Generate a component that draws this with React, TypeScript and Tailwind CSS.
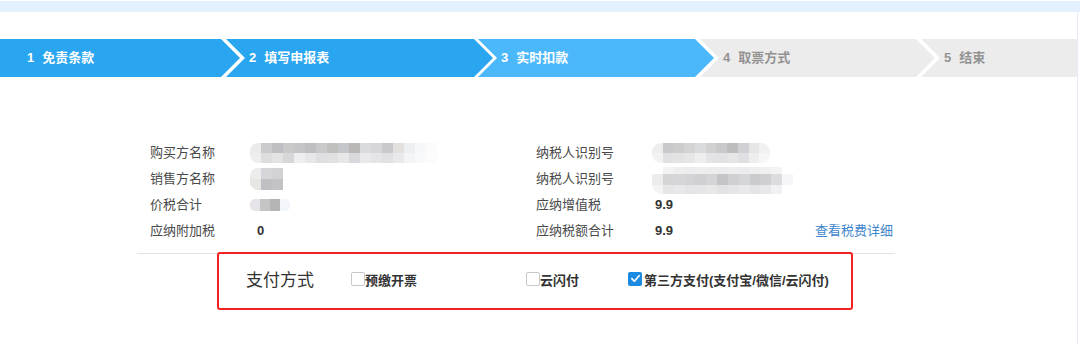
import React from "react";

const FONT = "font-['Liberation_Sans','Noto_Sans_CJK_SC',sans-serif]";

function Mosaic({ rows, cell = "w-[11px]", h = ["h-[10px]"], className = "" }: { rows: string[][]; cell?: string; h?: string[]; className?: string }) {
  return (
    <div className={`flex flex-col overflow-hidden ${className}`}>
      {rows.map((r, i) => (
        <div key={i} className="flex">
          {r.map((c, j) => (
            <div key={j} className={`${cell} ${h[i] ?? h[0]} ${c}`} />
          ))}
        </div>
      ))}
    </div>
  );
}

const buyer = [
  ["bg-[#ebebeb]", "bg-[#cbcbcd]", "bg-[#bebec2]", "bg-[#c9c9c9]", "bg-[#c5c5c7]", "bg-[#bfbfc3]", "bg-[#c9c9cb]", "bg-[#c0c1bd]", "bg-[#c5c7cd]", "bg-[#bab7b7]", "bg-[#d9dbde]", "bg-[#d7d7d9]", "bg-[#c9c9cd]", "bg-[#e3e1dd]", "bg-[#eeeff2]", "bg-[#f6f7f9]", "bg-[#fbfbfc]"],
  ["bg-[#eeeeee]", "bg-[#dddddd]", "bg-[#e3e3e3]", "bg-[#d7d7d9]", "bg-[#eeeef0]", "bg-[#e7e7e9]", "bg-[#dfdfe1]", "bg-[#e1e1e3]", "bg-[#e7e7e7]", "bg-[#d9d9dd]", "bg-[#e9e9eb]", "bg-[#e5e5e7]", "bg-[#e1e1e3]", "bg-[#e9e9eb]", "bg-[#f3f4f6]", "bg-[#f8f9fa]", "bg-[#fcfcfd]"],
];
const seller = [
  ["bg-[#ececec]", "bg-[#d6d6da]", "bg-[#d2d2d4]"],
  ["bg-[#e8e6e2]", "bg-[#c0c0c4]", "bg-[#c3c3c5]"],
];
const price = [["bg-[#e6e4e8]", "bg-[#c5c5c5]", "bg-[#b5b5b5]", "bg-[#f2f5f9]"]];
const tax1 = [
  ["bg-[#eeeeee]", "bg-[#c9c9cd]", "bg-[#cdcdcd]", "bg-[#d4d4d4]", "bg-[#d9dbdd]", "bg-[#d1d1d1]", "bg-[#c9c9cb]", "bg-[#bdbdbd]", "bg-[#d1d1d5]", "bg-[#e6e6e6]", "bg-[#f1f1f1]"],
  ["bg-[#f2f2f2]", "bg-[#e1e1e3]", "bg-[#e3e3e3]", "bg-[#e6e6e6]", "bg-[#eeeeef]", "bg-[#e4e4e6]", "bg-[#e2e2e4]", "bg-[#e6e6e6]", "bg-[#e0e0e4]", "bg-[#eeeeee]", "bg-[#f6f6f6]"],
];
const tax2 = [
  ["bg-[#ffffff]", "bg-[#f3f3f3]", "bg-[#eeeeee]", "bg-[#ececee]", "bg-[#eeeeee]", "bg-[#ededed]", "bg-[#ececee]", "bg-[#eeeeef]", "bg-[#ececee]", "bg-[#eeeeef]", "bg-[#f0f0f0]", "bg-[#f3f3f3]", "bg-[#ffffff]"],
  ["bg-[#ececec]", "bg-[#d5d5d5]", "bg-[#d6d6d8]", "bg-[#d3d3d5]", "bg-[#d0d0d4]", "bg-[#d5d5d7]", "bg-[#c5c5c9]", "bg-[#d0d0d2]", "bg-[#d4d6d9]", "bg-[#cbcbcf]", "bg-[#cfcfd1]", "bg-[#dcdcde]", "bg-[#f6f6f8]"],
  ["bg-[#f3f3f3]", "bg-[#e6e6e6]", "bg-[#e8e8ea]", "bg-[#e4e4e6]", "bg-[#e6e6e8]", "bg-[#e8e8e8]", "bg-[#e3e3e5]", "bg-[#e6e6e8]", "bg-[#e9e9eb]", "bg-[#e5e5e7]", "bg-[#e8e8ea]", "bg-[#f1f1f3]", "bg-[#ffffff]"],
];

function Steps() {
  const txt = "flex items-center gap-[8px] text-[13px] font-bold";
  return (
    <div className="flex h-[38px] w-[1077px]">
      <div className={`${txt} h-full w-[240px] shrink-0 bg-[#2aa5ef] pl-[27px] text-white [clip-path:polygon(0_0,221px_0,240px_50%,221px_100%,0_100%)]`}>
        <span>1</span><span>免责条款</span>
      </div>
      <div className={`${txt} -ml-[14px] h-full w-[267px] shrink-0 bg-[#2aa5ef] pl-[23px] text-white [clip-path:polygon(0_0,248px_0,267px_50%,248px_100%,0_100%,19px_50%)]`}>
        <span>2</span><span>填写申报表</span>
      </div>
      <div className={`${txt} -ml-[15px] h-full w-[236px] shrink-0 bg-[#4cb8fc] pl-[23px] text-white [clip-path:polygon(0_0,217px_0,236px_50%,217px_100%,0_100%,19px_50%)]`}>
        <span>3</span><span>实时扣款</span>
      </div>
      <div className={`${txt} -ml-[14px] h-full w-[235px] shrink-0 bg-[#ececec] pl-[23px] text-[#939393] [clip-path:polygon(0_0,216px_0,235px_50%,216px_100%,0_100%,19px_50%)]`}>
        <span>4</span><span>取票方式</span>
      </div>
      <div className={`${txt} -ml-[14px] h-full flex-1 bg-[#ececec] pl-[23px] text-[#939393] [clip-path:polygon(0_0,100%_0,100%_100%,0_100%,19px_50%)]`}>
        <span>5</span><span>结束</span>
      </div>
    </div>
  );
}

function Checkbox({ checked }: { checked?: boolean }) {
  if (checked) {
    return (
      <span className="mt-[-5px] flex h-[14px] w-[14px] shrink-0 items-center justify-center rounded-[2px] bg-[#1c8ae0]">
        <svg width="11" height="11" viewBox="0 0 12 12" fill="none">
          <path d="M2 6.2 L4.8 9 L10 3" stroke="white" strokeWidth="1.9" strokeLinecap="round" strokeLinejoin="round" />
        </svg>
      </span>
    );
  }
  return <span className="mt-[-5px] h-[14px] w-[14px] shrink-0 rounded-[2px] border border-[#c8c8c8] bg-white" />;
}

export default function App() {
  const label = "text-[13px] text-[#4a4a4a]";
  const val = "text-[13px] font-bold text-[#333]";
  return (
    <div className={`h-[344px] w-[1080px] overflow-hidden bg-white ${FONT}`}>
      <div className="pt-px">
        <div className="h-[11px] w-full bg-[#e3f0fe]" />
      </div>
      <div className="h-[332px] w-[1078px] border-r border-[#e4edf7]">
        <div className="pt-[27px]">
          <Steps />
        </div>

        <div className="ml-[137px] mt-[63px] w-[758px] border-b border-[#e3e3e3] pb-[9px] pl-[13px]">
          <div className="grid grid-cols-[100px_286px_116px_163px_80px] auto-rows-[26px] items-center">
            <div className={label}>购买方名称</div>
            <div><Mosaic rows={buyer} className="w-[190px] rounded-l-[8px] rounded-r-[3px]" /></div>
            <div className={label}>纳税人识别号</div>
            <div><Mosaic rows={tax1} className="w-[118px] rounded-[9px]" /></div>
            <div />

            <div className={label}>销售方名称</div>
            <div><Mosaic rows={seller} h={["h-[11px]", "h-[11px]"]} className="w-[33px] rounded-l-[8px]" /></div>
            <div className={label}>纳税人识别号</div>
            <div className="mt-[3px]"><Mosaic rows={tax2} h={["h-[7px]", "h-[11px]", "h-[9px]"]} className="w-[141px] rounded-l-[10px] rounded-r-[8px]" /></div>
            <div />

            <div className={label}>价税合计</div>
            <div><Mosaic rows={price} h={["h-[12px]"]} className="w-[40px] rounded-l-[5px] rounded-r-[5px]" /></div>
            <div className={label}>应纳增值税</div>
            <div className={`${val} pl-[3px]`}>9.9</div>
            <div />

            <div className={label}>应纳附加税</div>
            <div className={`${val} pl-[7px]`}>0</div>
            <div className={label}>应纳税额合计</div>
            <div className={`${val} pl-[3px]`}>9.9</div>
            <div className="text-[13px] text-[#3f86cc]">查看税费详细</div>
          </div>
        </div>

        <div className="-mt-[2px] ml-[217px] flex h-[58px] w-[636px] items-center rounded-[3px] border-2 border-[#f22020] pl-[27px]">
          <div className="w-[105px] shrink-0 text-[17px] text-[#333]">支付方式</div>
          <div className="flex w-[175px] shrink-0 items-center">
            <Checkbox />
            <span className="text-[13px] font-bold text-[#333]">预缴开票</span>
          </div>
          <div className="flex w-[102px] shrink-0 items-center">
            <Checkbox />
            <span className="text-[13px] font-bold text-[#333]">云闪付</span>
          </div>
          <div className="flex items-center">
            <Checkbox checked />
            <span className="ml-[2px] text-[13px] font-bold text-[#333]">第三方支付(支付宝/微信/云闪付)</span>
          </div>
        </div>
      </div>
    </div>
  );
}
